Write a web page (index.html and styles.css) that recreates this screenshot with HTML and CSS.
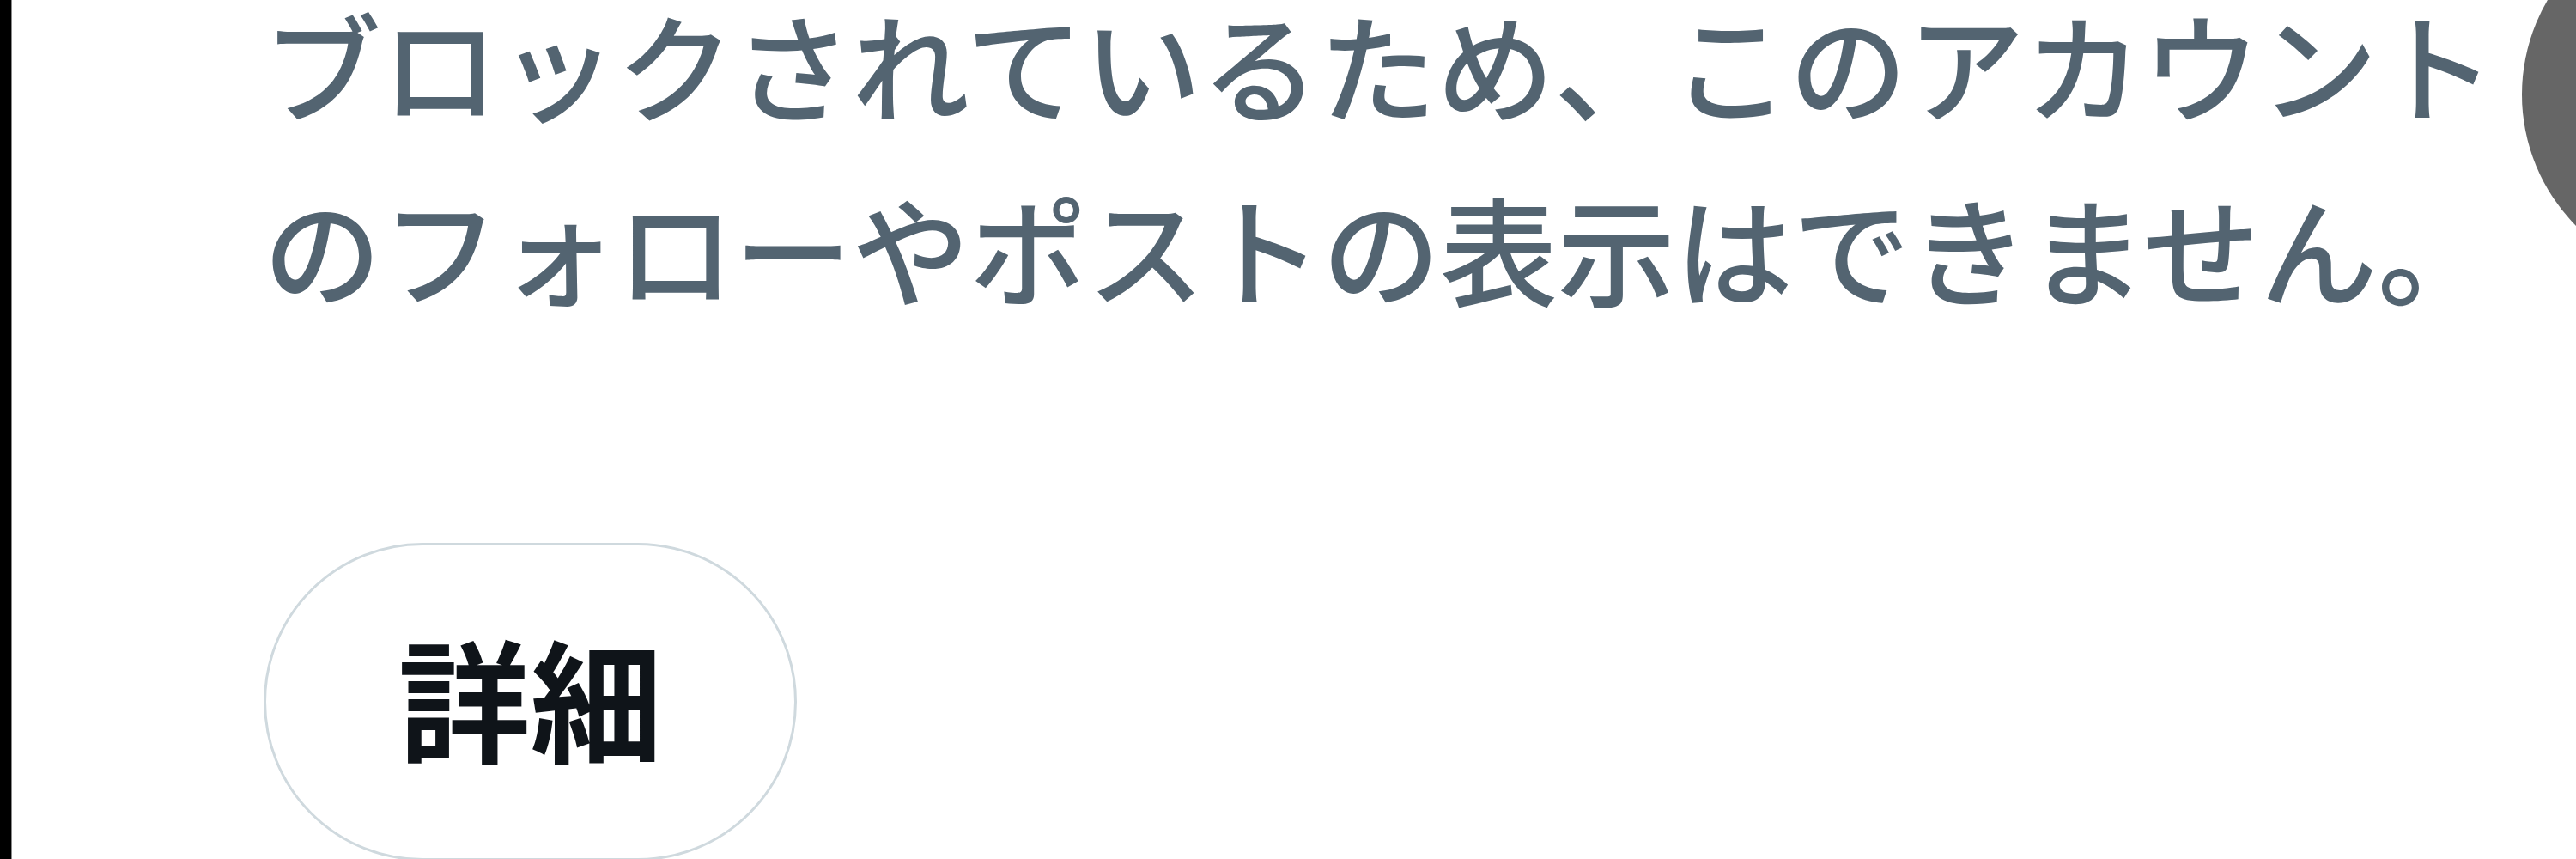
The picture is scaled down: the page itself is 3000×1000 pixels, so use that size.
FILE: index.html
```html
<!DOCTYPE html>
<html lang="ja">
<head>
<meta charset="utf-8">
<title>ブロック</title>
<link rel="stylesheet" href="styles.css">
</head>
<body>
<div class="screen">
  <div class="edge"></div>
  <main class="content">
    <p class="message">ブロックされているため、このアカウントのフォローやポストの表示はできません。</p>
    <button class="details" type="button">詳細</button>
  </main>
  <div class="fab"></div>
</div>
</body>
</html>
```

FILE: styles.css
```css
html, body {
  margin: 0;
  padding: 0;
  background: #ffffff;
}

body {
  width: 3000px;
  height: 1000px;
  overflow: hidden;
  font-family: "Noto Sans CJK JP", "Noto Sans", sans-serif;
}

.screen {
  position: relative;
  display: flex;
  width: 3000px;
  height: 1000px;
  overflow: hidden;
  background: #ffffff;
}

.edge {
  flex: 0 0 13px;
  background: #000000;
  border-right: 1px solid #8a8a8a;
}

.content {
  flex: 1 1 auto;
  padding-left: 293px;
  display: flex;
  flex-direction: column;
  align-items: flex-start;
}

.message {
  margin: -34px 0 0 0;
  width: 2640px;
  font-size: 137px;
  line-height: 214px;
  font-weight: 500;
  color: #536471;
}

.details {
  margin-top: 238px;
  box-sizing: border-box;
  width: 621px;
  height: 370px;
  flex: 0 0 auto;
  border: 3px solid #cfd9de;
  border-radius: 9999px;
  background: #ffffff;
  color: #0f1419;
  font-family: "Noto Sans CJK JP", "Noto Sans", sans-serif;
  font-size: 154px;
  font-weight: 700;
  line-height: 1;
  padding: 0 0 14px 0;
  display: flex;
  align-items: center;
  justify-content: center;
}

.fab {
  position: absolute;
  left: 2937px;
  top: -107px;
  width: 434px;
  height: 434px;
  border-radius: 50%;
  background: #666666;
}
```
